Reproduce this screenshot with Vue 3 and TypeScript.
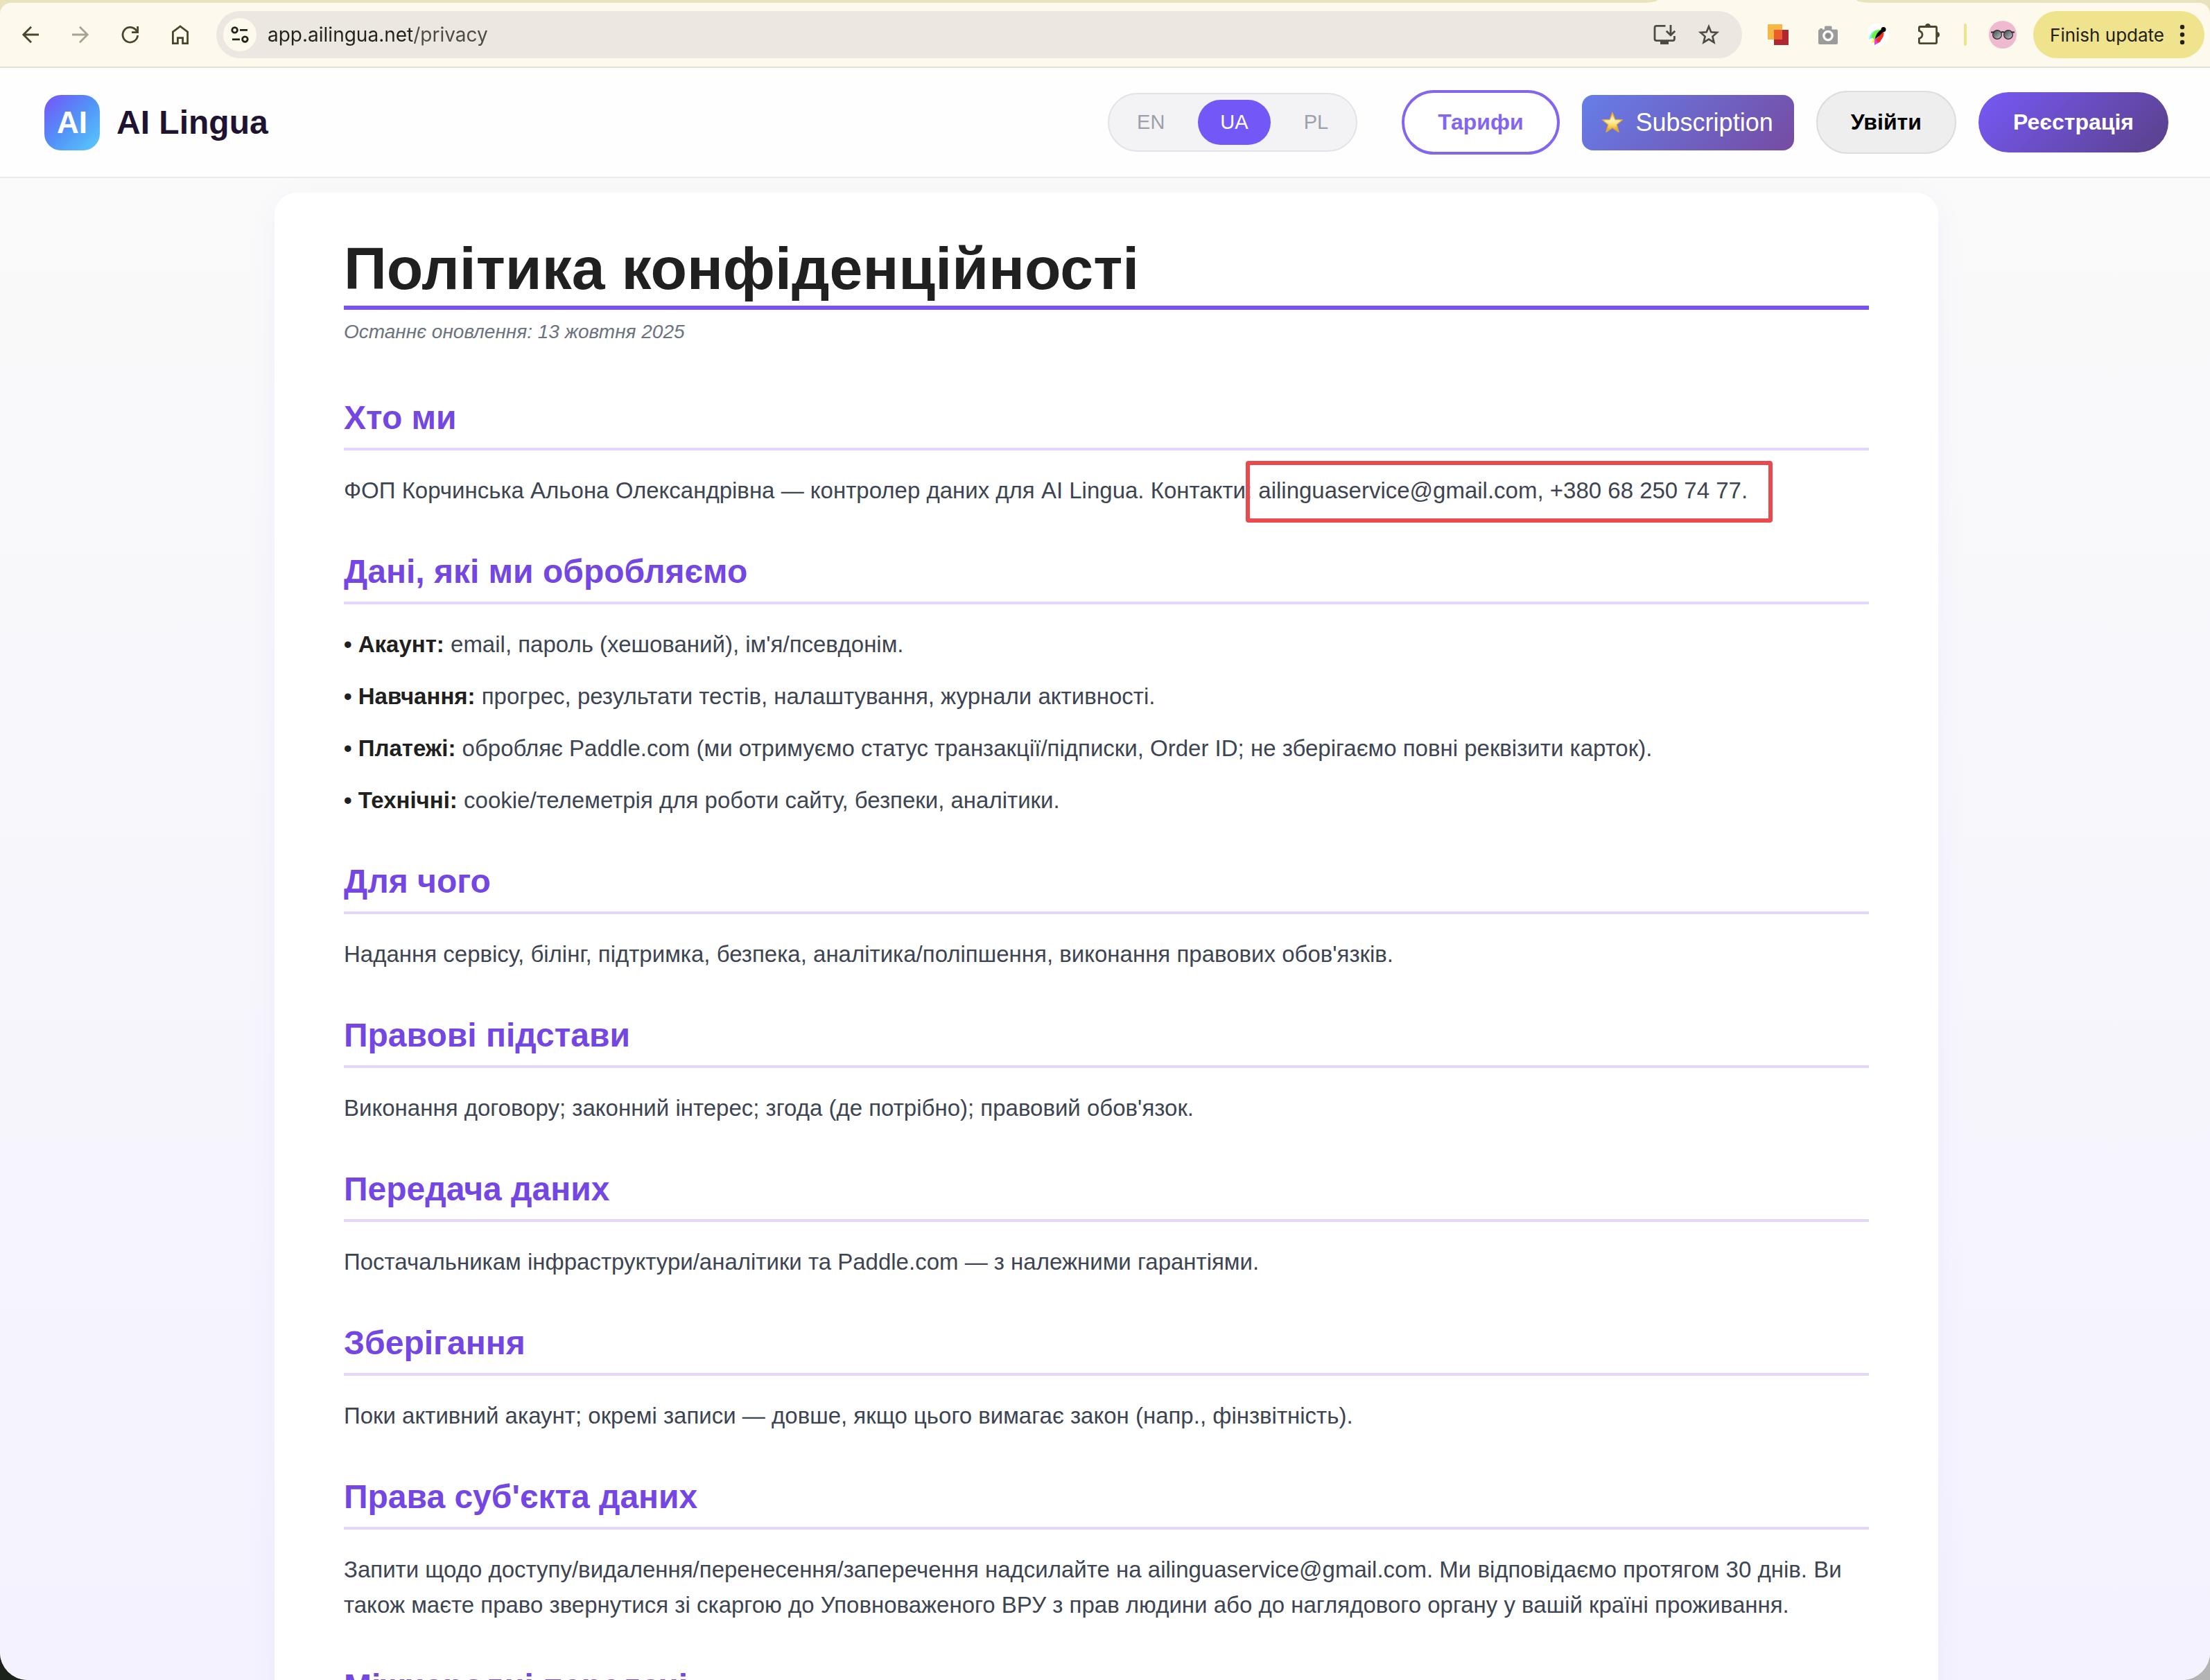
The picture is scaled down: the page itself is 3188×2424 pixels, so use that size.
<script setup lang="ts">
import { ref } from 'vue'

interface Line {
  label?: string
  text: string
  contact?: string
}

interface Section {
  title: string
  lines: Line[]
}

const address = ref('app.ailingua.net/privacy')
const languages = ['EN', 'UA', 'PL']
const language = ref('UA')

const sections: Section[] = [
  {
    title: 'Хто ми',
    lines: [
      {
        text: 'ФОП Корчинська Альона Олександрівна — контролер даних для AI Lingua. Контакти: ',
        contact: 'ailinguaservice@gmail.com, +380 68 250 74 77.',
      },
    ],
  },
  {
    title: 'Дані, які ми обробляємо',
    lines: [
      { label: 'Акаунт:', text: "email, пароль (хешований), ім'я/псевдонім." },
      { label: 'Навчання:', text: 'прогрес, результати тестів, налаштування, журнали активності.' },
      {
        label: 'Платежі:',
        text: 'обробляє Paddle.com (ми отримуємо статус транзакції/підписки, Order ID; не зберігаємо повні реквізити карток).',
      },
      { label: 'Технічні:', text: 'cookie/телеметрія для роботи сайту, безпеки, аналітики.' },
    ],
  },
  {
    title: 'Для чого',
    lines: [
      { text: "Надання сервісу, білінг, підтримка, безпека, аналітика/поліпшення, виконання правових обов'язків." },
    ],
  },
  {
    title: 'Правові підстави',
    lines: [{ text: "Виконання договору; законний інтерес; згода (де потрібно); правовий обов'язок." }],
  },
  {
    title: 'Передача даних',
    lines: [{ text: 'Постачальникам інфраструктури/аналітики та Paddle.com — з належними гарантіями.' }],
  },
  {
    title: 'Зберігання',
    lines: [{ text: 'Поки активний акаунт; окремі записи — довше, якщо цього вимагає закон (напр., фінзвітність).' }],
  },
  {
    title: "Права суб'єкта даних",
    lines: [
      {
        text: 'Запити щодо доступу/видалення/перенесення/заперечення надсилайте на ailinguaservice@gmail.com. Ми відповідаємо протягом 30 днів. Ви також маєте право звернутися зі скаргою до Уповноваженого ВРУ з прав людини або до наглядового органу у вашій країні проживання.',
      },
    ],
  },
  { title: 'Міжнародні передачі', lines: [] },
]
</script>

<template>
  <div class="window">
    <div class="chrome">
      <div class="tabstrip">
        <span class="tabs-before"></span>
        <span class="tabs-after"></span>
      </div>
      <div class="toolbar">
        <nav class="nav" aria-label="Browser">
          <button type="button" aria-label="Back">
            <svg viewBox="0 0 32 32" fill="none" stroke="#4a462d" stroke-width="2.8">
              <path d="M28 16H6M17 4.8L5.8 16L17 27.2" />
            </svg>
          </button>
          <button type="button" aria-label="Forward" disabled>
            <svg viewBox="0 0 32 32" fill="none" stroke="#a6a394" stroke-width="2.8">
              <path d="M4 16H26M15 4.8L26.2 16L15 27.2" />
            </svg>
          </button>
          <button type="button" aria-label="Reload">
            <svg viewBox="0 0 32 32" fill="none" stroke="#4a462d" stroke-width="2.8">
              <path d="M26.6 17A10.8 10.8 0 1 1 23.5 8.6L26 11.5" />
              <path d="M26.6 4V12.6H18" />
            </svg>
          </button>
          <button type="button" aria-label="Home">
            <svg viewBox="0 0 32 32" fill="none" stroke="#4a462d" stroke-width="2.8">
              <path d="M5.4 28.6V12L16 4L26.6 12V28.6H19.6V20.6H12.4V28.6Z" />
            </svg>
          </button>
        </nav>
        <div class="omnibox">
          <button type="button" class="site-info" aria-label="Site information">
            <svg viewBox="0 0 32 32" fill="none" stroke="#22211a" stroke-width="2.8">
              <circle cx="8.6" cy="9.4" r="3.8" />
              <path d="M16 9.4H27M5 22.8H16" />
              <circle cx="23.4" cy="22.6" r="3.8" />
            </svg>
          </button>
          <input v-model="address" class="address" type="text" aria-label="Address" />
          <button type="button" aria-label="Install app">
            <svg viewBox="0 0 32 32" fill="none" stroke="#4d4a41" stroke-width="2.8">
              <path d="M17.5 3.4H4.6Q2 3.4 2 6V22Q2 24.6 4.6 24.6H28Q30.4 24.6 30.4 22V18" />
              <path d="M25 2V16M18.8 10.8L25 16.8L31.2 10.8" />
              <path d="M10 24.6H22V30H10Z" fill="#4d4a41" stroke="none" />
            </svg>
          </button>
          <button type="button" aria-label="Bookmark this page">
            <svg viewBox="0 0 32 32" fill="none" stroke="#4d4a41" stroke-width="2.6">
              <path d="M16 4.2L19.3 12.2L28 12.9L21.4 18.6L23.5 27.2L16 22.6L8.5 27.2L10.6 18.6L4 12.9L12.7 12.2Z" />
            </svg>
          </button>
        </div>
        <div class="extensions">
          <button type="button" aria-label="Color squares extension">
            <svg viewBox="0 0 32 32">
              <rect x="1" y="1" width="21" height="22" fill="#f6b840" />
              <rect x="10" y="9" width="21" height="22" fill="#b02732" />
              <rect x="10" y="9" width="12" height="14" fill="#ec5c2d" />
            </svg>
          </button>
          <button type="button" aria-label="Screenshot extension">
            <svg viewBox="0 0 32 32">
              <path
                fill="#9b9b9b"
                d="M2 10Q2 8.5 4 8.5V7H8V8.5H11V5Q11 3.5 12.5 3.5H20Q21.5 3.5 21.5 5V8.5H28Q30 8.5 30 10.5V28Q30 30 28 30H4Q2 30 2 28Z"
              />
              <circle cx="16" cy="17.6" r="6.2" fill="#9b9b9b" stroke="#fff" stroke-width="3.2" />
              <circle cx="16" cy="17.6" r="3" fill="#8a8a8a" />
            </svg>
          </button>
          <button type="button" aria-label="Color picker extension">
            <svg viewBox="0 0 32 32">
              <circle cx="16" cy="16" r="16" fill="#fff" />
              <path d="M3 23Q4 12 14 9L10 20Z" fill="#7ff4f6" />
              <path d="M6 28L13 17L12 27Z" fill="#fff33b" />
              <path d="M6 21Q8 8 22 8.5L11 23Q8 20 6 21Z" fill="#6bf23c" />
              <path d="M11 31V22L17 20L20 26Z" fill="#e93cf0" />
              <path d="M13 24L24 9Q27 20 16 28Q14 25 13 24Z" fill="#ea3323" />
              <path d="M12 22Q13 13 22 8L24 11Q19 18 12 22Z" fill="#000" />
              <circle cx="24" cy="8.5" r="3.5" fill="#000" />
            </svg>
          </button>
          <button type="button" aria-label="Extensions">
            <svg viewBox="0 0 32 32">
              <path
                d="M5 4.5H27Q28.6 4.5 28.6 6V27Q28.6 28.6 27 28.6H5Q3.4 28.6 3.4 27V21.5Q8 20 8 16Q8 12 3.4 10.5V6Q3.4 4.5 5 4.5Z"
                fill="none"
                stroke="#4a462d"
                stroke-width="2.8"
              />
              <path d="M12 4.5Q12 0 16 0Q20 0 20 4.5ZM28.6 12Q33 12 33 16Q33 20 28.6 20Z" fill="#4a462d" />
            </svg>
          </button>
        </div>
        <span class="divider"></span>
        <button type="button" class="avatar" aria-label="Profile">
          <svg viewBox="0 0 40 40">
            <defs>
              <linearGradient id="lens" x1="0" y1="0" x2="1" y2="1">
                <stop offset="0" stop-color="#3c4244" />
                <stop offset="1" stop-color="#c3cdd2" />
              </linearGradient>
            </defs>
            <circle cx="20" cy="20" r="20" fill="#efb9d0" />
            <g fill="url(#lens)" stroke="#2d2a2c" stroke-width="1.2">
              <circle cx="12" cy="20" r="6.4" />
              <circle cx="28" cy="20" r="6.4" />
            </g>
            <path d="M3 16.5H8M32 16.5H37M17.5 17Q20 15 22.5 17" fill="none" stroke="#2d2a2c" stroke-width="1.8" />
          </svg>
        </button>
        <button type="button" class="update">
          Finish update
          <svg viewBox="0 0 8 32" fill="#22211a">
            <circle cx="4" cy="5" r="3.2" />
            <circle cx="4" cy="16" r="3.2" />
            <circle cx="4" cy="27" r="3.2" />
          </svg>
        </button>
      </div>
    </div>

    <header class="header">
      <a class="brand" href="#">
        <span class="logo">AI</span>
        <span>AI Lingua</span>
      </a>
      <div class="languages">
        <button
          v-for="code in languages"
          :key="code"
          type="button"
          :class="{ active: code === language }"
          :aria-pressed="code === language"
          @click="language = code"
        >
          {{ code }}
        </button>
      </div>
      <div class="actions">
        <button type="button" class="pill tariffs">Тарифи</button>
        <button type="button" class="subscription">
          <svg viewBox="0 0 32 32">
            <defs>
              <linearGradient id="star" x1="0" y1="0" x2="0" y2="1">
                <stop offset="0" stop-color="#f3b63a" />
                <stop offset="0.35" stop-color="#fff6c4" />
                <stop offset="0.65" stop-color="#fbdc68" />
                <stop offset="1" stop-color="#d98a20" />
              </linearGradient>
            </defs>
            <path
              d="M16 1.5L19.8 11.5L30.5 12L22.2 18.8L25 29.5L16 23.5L7 29.5L9.8 18.8L1.5 12L12.2 11.5Z"
              fill="url(#star)"
              stroke="#e5a63a"
              stroke-width="1.4"
              stroke-linejoin="round"
            />
          </svg>
          Subscription
        </button>
        <button type="button" class="pill login">Увійти</button>
        <button type="button" class="pill register">Реєстрація</button>
      </div>
    </header>

    <main class="page">
      <article class="card">
        <h1>Політика конфіденційності</h1>
        <p class="updated">Останнє оновлення: 13 жовтня 2025</p>
        <section v-for="section in sections" :key="section.title">
          <h2>{{ section.title }}</h2>
          <p v-for="line in section.lines" :key="line.text">
            <template v-if="line.label"><strong>• {{ line.label }}</strong>&nbsp;</template
            >{{ line.text }}<span v-if="line.contact" class="contact">{{ line.contact }}</span>
          </p>
        </section>
      </article>
    </main>
  </div>
</template>

<style>
body {
  margin: 0;
  background: linear-gradient(90deg, #1c221c 50%, #b4b4b4 50%);
}
</style>

<style scoped>
* {
  box-sizing: border-box;
}

.window {
  display: flex;
  flex-direction: column;
  height: 100vh;
  overflow: hidden;
  border-radius: 0 0 40px 40px;
  background: #fff;
  font-family: "Liberation Sans", Arial, sans-serif;
}

button {
  margin: 0;
  padding: 0;
  border: 0;
  background: none;
  font: inherit;
  white-space: nowrap;
  cursor: pointer;
}

svg {
  display: block;
  width: 32px;
  height: 32px;
  overflow: visible;
}

/* Browser frame */
.chrome {
  flex: none;
  background: #e8e2bf;
  font-family: Inter, sans-serif;
}

.tabstrip {
  display: flex;
  justify-content: space-between;
  height: 4px;
  background: #fdf9ec;
}

.tabs-before,
.tabs-after {
  background: #e8e2bf;
}

.tabs-before {
  width: 75%;
  border-radius: 0 0 24px 0 / 0 0 4px 0;
}

.tabs-after {
  width: 16%;
  border-radius: 0 0 0 24px / 0 0 0 4px;
}

.toolbar {
  display: flex;
  align-items: center;
  height: 94px;
  padding: 0 8px 0 28px;
  border-bottom: 2px solid #e4e1d3;
  border-radius: 16px 16px 0 0;
  background: #fdf9ec;
}

.nav,
.extensions {
  display: flex;
  gap: 40px;
}

.omnibox {
  display: flex;
  flex: 1;
  align-items: center;
  gap: 32px;
  height: 68px;
  margin: 0 36px;
  padding: 0 32px 0 10px;
  border-radius: 34px;
  background: #ece7e1;
}

.site-info {
  display: grid;
  place-items: center;
  width: 48px;
  height: 48px;
  margin-right: -16px;
  border-radius: 50%;
  background: #fdf9ec;
}

.address {
  flex: 1;
  min-width: 0;
  padding: 0;
  border: 0;
  outline: 0;
  color: #22211a;
  background: linear-gradient(90deg, #22211a 210px, #4d4a41 210px);
  background-clip: text;
  -webkit-text-fill-color: transparent;
  font-family: Inter, sans-serif;
  font-size: 28px;
  line-height: 40px;
}

.divider {
  width: 4px;
  height: 32px;
  margin: 0 32px 0 36px;
  border-radius: 2px;
  background: #f0e38d;
}

.avatar svg {
  width: 40px;
  height: 40px;
}

.update {
  display: flex;
  align-items: center;
  gap: 22px;
  height: 68px;
  margin-left: 24px;
  padding: 0 28px 0 24px;
  border-radius: 34px;
  background: #f0e38d;
  color: #22211a;
  font-size: 26px;
}

.update svg {
  width: 8px;
}

/* Site header */
.header {
  display: flex;
  flex: none;
  align-items: center;
  padding: 32px 60px 32px 64px;
  border-bottom: 2px solid #ebebeb;
  background: #fefefe;
}

.brand {
  display: flex;
  align-items: center;
  gap: 24px;
  margin-right: auto;
  color: #1e1432;
  font-size: 48px;
  font-weight: 700;
  text-decoration: none;
}

.logo {
  display: grid;
  place-items: center;
  width: 80px;
  height: 80px;
  border-radius: 24px;
  background: linear-gradient(135deg, #7653f8, #5292f8 50%, #5acbfb);
  color: #fff;
  font-size: 44px;
}

.languages {
  display: flex;
  gap: 16px;
  margin-right: 64px;
  padding: 8px;
  border: 2px solid #e2e2e8;
  border-radius: 44px;
  background: #f3f3f6;
}

.languages button {
  height: 65px;
  padding: 0 32px;
  border-radius: 33px;
  color: #9ca0ab;
  font-size: 29px;
}

.languages .active {
  background: #7458f7;
  color: #fff;
}

.actions {
  display: flex;
  align-items: center;
  gap: 32px;
}

.pill {
  padding: 0 48px;
  border-radius: 48px;
  font-size: 32px;
  font-weight: 700;
}

.tariffs {
  height: 93px;
  border: 4px solid #8465ee;
  background: #fff;
  color: #8465ee;
}

.subscription {
  display: flex;
  align-items: center;
  gap: 18px;
  height: 80px;
  padding: 0 30px 0 28px;
  border-radius: 16px;
  background: linear-gradient(135deg, #667eea, #764ba2);
  color: #fff;
  font-size: 36px;
}

.login {
  height: 91px;
  border: 2px solid #dddddd;
  background: #eeeeee;
  color: #000;
}

.register {
  height: 87px;
  padding: 0 50px;
  background: linear-gradient(135deg, #7759f7, #5a4188);
  color: #fff;
}

/* Policy */
.page {
  flex: 1;
  min-height: 0;
  padding: 21px 0 60px 4px;
  overflow: hidden;
  background: linear-gradient(#fafafa, #f4f2fe);
}

.card {
  max-width: 2400px;
  margin: 0 auto;
  padding: 60px 100px;
  border-radius: 32px;
  background: #fff;
  box-shadow: 0 8px 40px rgba(118, 75, 255, 0.06);
  color: #3d4452;
  font-size: 33px;
  line-height: 51px;
}

h1 {
  margin: 0;
  padding-bottom: 5px;
  border-bottom: 6px solid #7b50f5;
  color: #202020;
  font-size: 86px;
  line-height: 98px;
}

.card .updated {
  padding: 10px 0;
  color: #6b7280;
  font-size: 28px;
  font-style: italic;
  line-height: 44px;
}

h2 {
  margin: 60px 0 32px;
  padding-bottom: 12px;
  border-bottom: 4px solid #e4d5fc;
  color: #7447e3;
  font-size: 48px;
  line-height: 63px;
}

.card p {
  margin: 0;
}

.card p + p {
  margin-top: 24px;
}

strong {
  color: #202020;
}

.contact {
  position: relative;
}

/* Red callout drawn around the contact details */
.contact::after {
  content: "";
  position: absolute;
  inset: -24px -36px -28px -18px;
  border: 6px solid #e84a4d;
  border-radius: 4px;
}
</style>
